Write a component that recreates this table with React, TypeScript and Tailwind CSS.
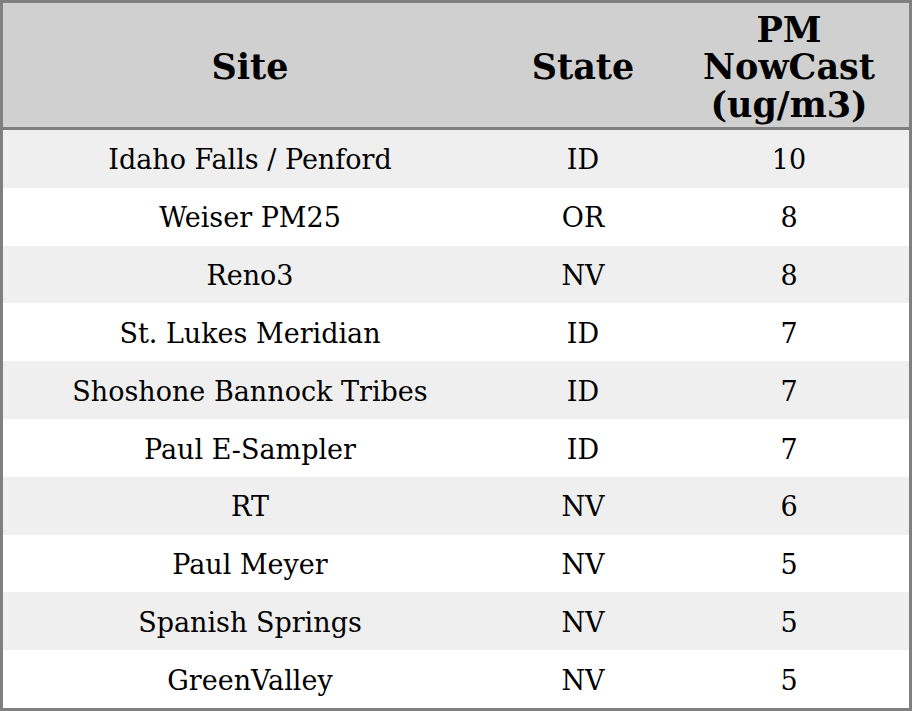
const rows = [
  { site: 'Idaho Falls / Penford', state: 'ID', pm: 10 },
  { site: 'Weiser PM25', state: 'OR', pm: 8 },
  { site: 'Reno3', state: 'NV', pm: 8 },
  { site: 'St. Lukes Meridian', state: 'ID', pm: 7 },
  { site: 'Shoshone Bannock Tribes', state: 'ID', pm: 7 },
  { site: 'Paul E-Sampler', state: 'ID', pm: 7 },
  { site: 'RT', state: 'NV', pm: 6 },
  { site: 'Paul Meyer', state: 'NV', pm: 5 },
  { site: 'Spanish Springs', state: 'NV', pm: 5 },
  { site: 'GreenValley', state: 'NV', pm: 5 },
]

export default function App() {
  return (
    <div
      className="w-[912px] h-[711px] border-[3px] border-[#808080] bg-white text-black"
      style={{ fontFamily: '"DejaVu Serif", serif' }}
    >
      <table className="w-full h-full border-collapse table-fixed">
        <colgroup>
          <col className="w-[494px]" />
          <col className="w-[172px]" />
          <col />
        </colgroup>
        <thead>
          <tr className="h-[125px] bg-[#d0d0d0] border-b-[3px] border-[#808080]">
            <th className="pt-1 text-[35px] font-bold leading-[37.5px] text-center align-middle">Site</th>
            <th className="pt-1 text-[35px] font-bold leading-[37.5px] text-center align-middle">State</th>
            <th className="pt-1 text-[35px] font-bold leading-[37.5px] text-center align-middle">
              PM
              <br />
              NowCast
              <br />
              (ug/m3)
            </th>
          </tr>
        </thead>
        <tbody>
          {rows.map((r, i) => (
            <tr key={i} className={i % 2 === 0 ? 'bg-[#efefef]' : 'bg-white'}>
              <td className="pt-1 text-center align-middle text-[27px]">{r.site}</td>
              <td className="pt-1 text-center align-middle text-[27px]">{r.state}</td>
              <td className="pt-1 text-center align-middle text-[27px]">{r.pm}</td>
            </tr>
          ))}
        </tbody>
      </table>
    </div>
  )
}
